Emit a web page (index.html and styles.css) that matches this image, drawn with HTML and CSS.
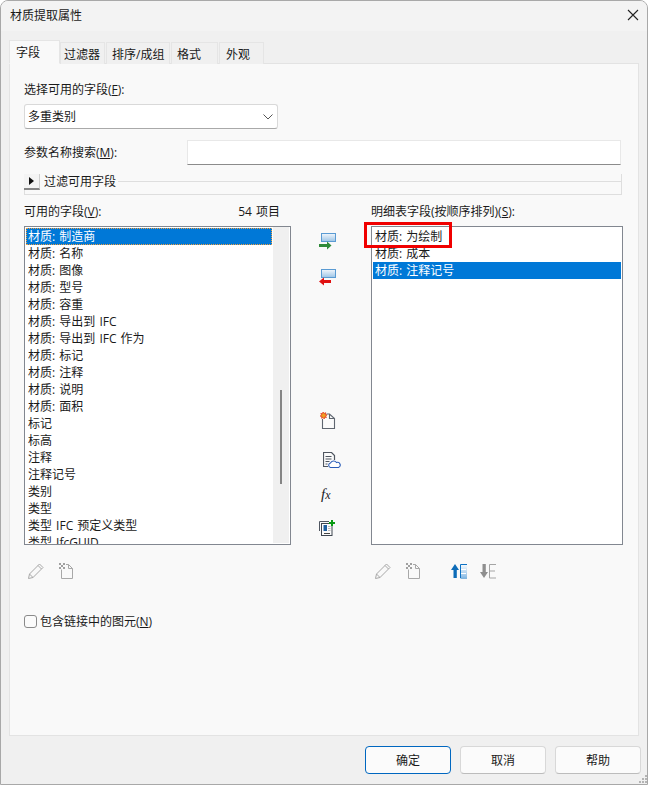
FILE: index.html
```html
<!DOCTYPE html>
<html lang="zh-CN">
<head>
<meta charset="utf-8">
<title>材质提取属性</title>
<link rel="stylesheet" href="styles.css">
</head>
<body>
<div class="window">
  <header class="titlebar">
    <span class="title">材质提取属性</span>
    <svg class="close" width="12" height="12" viewBox="0 0 12 12"><path d="M1 1L11 11M11 1L1 11" stroke="#222" stroke-width="1.1" fill="none"/></svg>
  </header>
  <main class="dialog">
    <nav class="tabs">
      <div class="tab active">字段</div>
      <div class="tab w45 tight">过滤器</div>
      <div class="tab w64">排序/成组</div>
      <div class="tab w47">格式</div>
      <div class="tab w45 wide">外观</div>
    </nav>
    <section class="panel">
      <div class="label first">选择可用的字段(<u>F</u>):</div>
      <div class="select">
        <span>多重类别</span>
        <svg width="10" height="6" viewBox="0 0 10 6"><path d="M0.5 0.5L5 5L9.5 0.5" stroke="#555" fill="none"/></svg>
      </div>
      <div class="search-row">
        <span class="search-label">参数名称搜索(<u>M</u>):</span>
        <div class="input"></div>
      </div>
      <div class="filter-row">
        <div class="expander"><svg width="5" height="8" viewBox="0 0 5 8"><path d="M0 0L5 4L0 8Z" fill="#111"/></svg></div>
        <span class="filter-text">过滤可用字段</span>
        <div class="filter-rule"></div>
      </div>
      <div class="columns">
        <div class="col-left">
          <div class="col-head"><span>可用的字段(<u>V</u>):</span><span class="count">54 项目</span></div>
          <div class="list">
            <div class="rows">
              <div class="row selected focus">材质: 制造商</div>
              <div class="row">材质: 名称</div>
              <div class="row">材质: 图像</div>
              <div class="row">材质: 型号</div>
              <div class="row">材质: 容重</div>
              <div class="row">材质: 导出到 IFC</div>
              <div class="row">材质: 导出到 IFC 作为</div>
              <div class="row">材质: 标记</div>
              <div class="row">材质: 注释</div>
              <div class="row">材质: 说明</div>
              <div class="row">材质: 面积</div>
              <div class="row">标记</div>
              <div class="row">标高</div>
              <div class="row">注释</div>
              <div class="row">注释记号</div>
              <div class="row">类别</div>
              <div class="row">类型</div>
              <div class="row">类型 IFC 预定义类型</div>
              <div class="row">类型 IfcGUID</div>
            </div>
            <div class="scrollbar"><div class="thumb"></div></div>
          </div>
          <div class="tools">
            <svg class="tool" width="18" height="18" viewBox="0 0 18 18"><path d="M1.500 16.500L2.500 12L12.500 2L16 5.500L6 15.500ZM2.500 12L6 15.500M11 3.500L14.500 7" fill="none" stroke="#a8a8a8"/></svg>
            <svg class="tool gap-doc" width="18" height="18" viewBox="0 0 18 18"><path d="M3.500 7.500V16.500H14.500V6.500H10.500V2.500H8M10.500 2.500L14.500 6.500" fill="none" stroke="#a8a8a8"/><path d="M1 1h2v2H1zM5 1h2v2H5zM3 3h2v2H3zM1 5h2v2H1zM5 5h2v2H5z" fill="#a0a0a0"/></svg>
          </div>
        </div>
        <div class="col-mid">
          <svg class="mid-icon first-mid" width="18" height="18" viewBox="0 0 18 18"><defs><linearGradient id="g1" x1="0" y1="0" x2="0" y2="1"><stop offset="0" stop-color="#f2f7fc"/><stop offset="1" stop-color="#9cc4e6"/></linearGradient></defs><rect x="2.500" y="0.500" width="14" height="8" fill="url(#g1)" stroke="#5a9bd3"/><path d="M0 11h8V8.500l4.500 4-4.500 4V14H0Z" fill="#2f8a3a"/></svg>
          <svg class="mid-icon second-mid" width="18" height="18" viewBox="0 0 18 18"><rect x="2.500" y="0.500" width="14" height="8" fill="url(#g1)" stroke="#5a9bd3"/><path d="M12 11H5V8.500L0 12.500l5 4V14h7Z" fill="#e01010"/></svg>
          <svg class="mid-icon third-mid" width="18" height="18" viewBox="0 0 18 18"><path d="M3.500 7V16.500H15.500V6.500L10.500 2H7.500M10.500 2V6.500H15.500" fill="#fbfbfb" stroke="#5f6670" stroke-width="1.100"/><path d="M4 0l1 1.500 1.700-.8-.4 1.800 1.800.4-1.500 1 .8 1.700-1.800-.4-.4 1.800-1-1.500-1.700.8.400-1.800-1.800-.4 1.500-1-.8-1.700 1.800.4z" fill="#f0a020" stroke="#e02a10" stroke-width=".7"/></svg>
          <svg class="mid-icon fourth-mid" width="18" height="18" viewBox="0 0 18 18"><path d="M5 14.500H0.500V0.500H8.500L11.500 3.500V8" fill="#fbfbfb" stroke="#4f5660" stroke-width="1.200"/><path d="M2.500 4.500h6M2.500 7h6M2.500 9.500h4M2.500 12h2" stroke="#4f5660"/><path d="M7.500 15.500a2.300 2.300 0 0 1 0-4.500a3.500 3.500 0 0 1 6-.5a2.500 2.500 0 0 1 2 5Z" fill="#fff" stroke="#2a5cb8" stroke-width="1.100"/></svg>
          <div class="fx"><i>f</i><i class="x">x</i></div>
          <svg class="mid-icon sixth-mid" width="18" height="18" viewBox="0 0 18 18"><path d="M0.500 11V1.500H10" fill="none" stroke="#4f5660"/><rect x="2.500" y="3.500" width="10.500" height="12" fill="#fbfbfb" stroke="#3f4650"/><rect x="4.500" y="5" width="3.500" height="6" fill="#1d5f9f"/><path d="M9 6.500h2.500M9 8.500h2.500M9 10.500h2.500" stroke="#bbb"/><path d="M5 13.500h6" stroke="#444"/><path d="M12 0h2v2h2v2h-2v2h-2V4h-2V2h2Z" fill="#0a9a14"/></svg>
        </div>
        <div class="col-right">
          <div class="head-plain">明细表字段(按顺序排列)(<u>S</u>):</div>
          <div class="list list-right">
            <div class="rows">
              <div class="row">材质: 为绘制</div>
              <div class="row">材质: 成本</div>
              <div class="row selected">材质: 注释记号</div>
            </div>
            <div class="annotation"></div>
          </div>
          <div class="tools">
            <svg class="tool" width="18" height="18" viewBox="0 0 18 18"><path d="M1.500 16.500L2.500 12L12.500 2L16 5.500L6 15.500ZM2.500 12L6 15.500M11 3.500L14.500 7" fill="none" stroke="#a8a8a8"/></svg>
            <svg class="tool gap-doc" width="18" height="18" viewBox="0 0 18 18"><path d="M3.500 7.500V16.500H14.500V6.500H10.500V2.500H8M10.500 2.500L14.500 6.500" fill="none" stroke="#a8a8a8"/><path d="M1 1h2v2H1zM5 1h2v2H5zM3 3h2v2H3zM1 5h2v2H1zM5 5h2v2H5z" fill="#a0a0a0"/></svg>
            <svg class="tool gap-up" width="18" height="18" viewBox="0 0 18 18"><defs><linearGradient id="g2" x1="0" y1="0" x2="0" y2="1"><stop offset="0" stop-color="#f4f9fd"/><stop offset="1" stop-color="#8dbde6"/></linearGradient></defs><path d="M16 2.500H9.500V16H16" fill="none" stroke="#0d72c4"/><rect x="10" y="3" width="6" height="12.500" fill="url(#g2)"/><path d="M10 7.500h5M10 11.500h5" stroke="#fff"/><path d="M4 2L8 8H5.800V16H2.500V8H0Z" fill="#0d6cb8"/></svg>
            <svg class="tool gap-down" width="18" height="18" viewBox="0 0 18 18"><path d="M16 2.500H9.500V16H16M9.500 9H15" fill="none" stroke="#a5a5a5"/><path d="M4 16L8 10H5.800V2H2.500V10H0Z" fill="#8f8f8f"/></svg>
          </div>
        </div>
      </div>
      <label class="check"><span class="box"></span><span>包含链接中的图元(<u>N</u>)</span></label>
    </section>
    <footer class="footer">
      <div class="btn primary">确定</div>
      <div class="btn">取消</div>
      <div class="btn">帮助</div>
    </footer>
    <svg class="grip" width="8" height="8" viewBox="0 0 8 8"><path d="M6 0h2v2H6zM3 3h2v2H3zM6 3h2v2H6zM0 6h2v2H0zM3 6h2v2H3zM6 6h2v2H6z" fill="#b4b4b4"/></svg>
  </main>
</div>
</body>
</html>
```
FILE: styles.css
```css
* { box-sizing: border-box; }
html, body { margin: 0; padding: 0; }
body {
  width: 649px;
  height: 785px;
  overflow: hidden;
  font-family: "Open Sans", "Noto Sans CJK SC", sans-serif;
  font-size: 12px;
  line-height: 17px;
  color: #1a1a1a;
  background: #fff;
}
u { text-underline-offset: 1px; }
.window {
  position: relative;
  width: 648px;
  height: 785px;
  display: flex;
  flex-direction: column;
  border: 1px solid #a8a8a8;
  border-radius: 8px 8px 0 0;
  overflow: hidden;
  background: #f0f0f0;
}
.titlebar {
  height: 30px;
  flex: none;
  display: flex;
  align-items: center;
  justify-content: space-between;
  padding: 0 8px 2px 9px;
  background: #f3f3f3;
}
.title { font-size: 12px; color: #1a1a1a; }
.dialog {
  flex: 1;
  display: flex;
  flex-direction: column;
  padding: 10px 8px 0 8px;
  position: relative;
}
.tabs {
  display: flex;
  align-items: flex-end;
  height: 23px;
  gap: 1px;
  position: relative;
  z-index: 1;
  margin-bottom: -1px;
}
.tab {
  height: 22px;
  padding: 3px 0 0 5px;
  background: #f0f0f0;
  border: 1px solid #e5e5e5;
  border-bottom: none;
}
.tab.active {
  width: 51px;
  height: 24px;
  margin-right: -1px;
  padding: 3px 0 0 6px;
  background: #f9f9f9;
  border-bottom: 1px solid #f9f9f9;
}
.tight { padding-left: 3px; }
.wide { padding-left: 6px; }
.w45 { width: 45px; }
.w64 { width: 64px; }
.w47 { width: 47px; }
.panel {
  width: 630px;
  height: 673px;
  flex: none;
  padding: 17px 15px 0 14px;
  background: #f9f9f9;
  border: 1px solid #e3e3e3;
}
.first { height: 17px; }
.select {
  width: 254px;
  height: 25px;
  margin-top: 6px;
  display: flex;
  align-items: center;
  justify-content: space-between;
  padding: 0 4px 0 3px;
  background: #fff;
  border: 1px solid #d9d9d9;
  border-bottom-color: #a9a9a9;
  border-radius: 3px;
}
.search-row {
  display: flex;
  align-items: center;
  height: 25px;
  margin-top: 11px;
}
.search-label { width: 163px; }
.input {
  width: 434px;
  height: 25px;
  background: #fff;
  border: 1px solid #e8e8e8;
  border-bottom: 1px solid #8b8b8b;
}
.filter-row {
  display: flex;
  height: 21px;
  margin-top: 9px;
  width: 598px;
  border-bottom: 1px solid #dedede;
  border-right: 1px solid #dedede;
  border-left: 1px solid #dedede;
}
.expander {
  width: 16px;
  height: 16px;
  margin-left: -1px;
  display: flex;
  align-items: center;
  justify-content: center;
  background: #f4f4f4;
  border-right: 1px solid #cfcfcf;
  border-bottom: 2px solid #858585;
}
.filter-text { margin: -1px 0 0 4px; line-height: 17px; }
.filter-rule {
  flex: 1;
  height: 1px;
  margin: 7px 0 0 2px;
  background: #dedede;
}
.columns {
  display: grid;
  grid-template-columns: 267px 80px 252px;
  margin-top: 8px;
}
.col-head {
  display: flex;
  justify-content: space-between;
  height: 17px;
  padding-right: 11px;
}
.head-plain { height: 17px; }
.count { white-space: pre; word-spacing: 1px; }
.list {
  position: relative;
  height: 319px;
  margin-top: 6px;
  display: flex;
  background: #fff;
  border: 1px solid #828790;
  overflow: hidden;
}
.list-right { overflow: visible; }
.rows {
  flex: 1;
  padding: 1px 1px 0 1px;
  overflow: hidden;
}
.row {
  height: 17px;
  line-height: 17px;
  padding-left: 2px;
  white-space: nowrap;
  word-spacing: 1px;
}
.selected { background: #0078d7; color: #fff; }
.focus { outline: 1px dotted #f0a040; outline-offset: -1px; }
.scrollbar {
  width: 16px;
  flex: none;
  margin: 0 1px 1px 0;
  background: #f0f0f0;
  padding: 163px 0 0 7px;
}
.thumb { width: 2px; height: 94px; background: #858585; }
.col-mid {
  display: flex;
  flex-direction: column;
  align-items: flex-start;
  padding: 0 0 0 28px;
}
.mid-icon { display: block; flex: none; }
.first-mid { margin-top: 30px; }
.second-mid { margin-top: 18px; }
.third-mid { margin-top: 125px; }
.fourth-mid { margin-top: 22px; margin-left: 4px; }
.fx {
  height: 18px;
  margin: 16px 0 0 2px;
  font-family: "Liberation Serif", serif;
  font-size: 15px;
  line-height: 16px;
  color: #222;
}
.fx .x { font-size: 12px; }
.sixth-mid { margin-top: 16px; }
.col-right { min-width: 0; }
.annotation {
  position: absolute;
  left: -8px;
  top: -5px;
  width: 88px;
  height: 26px;
  border: 3px solid #f00000;
  pointer-events: none;
}
.tools {
  display: flex;
  height: 18px;
  margin-top: 17px;
  padding-left: 3px;
}
.gap-doc { margin-left: 13px; }
.gap-up { margin-left: 28px; }
.gap-down { margin-left: 11px; }
.check {
  display: flex;
  align-items: center;
  gap: 3px;
  height: 17px;
  margin-top: 33px;
}
.box {
  width: 13px;
  height: 13px;
  background: #fbfbfb;
  border: 1px solid #8a8a8a;
  border-radius: 3px;
}
.footer {
  display: flex;
  justify-content: flex-end;
  gap: 9px;
  margin: 10px -2px 0 0;
}
.btn {
  width: 86px;
  height: 28px;
  display: flex;
  align-items: center;
  justify-content: center;
  background: #fbfbfb;
  border: 1px solid #d8d8d8;
  border-bottom-color: #bcbcbc;
  border-radius: 4px;
}
.primary { border: 1.500px solid #0067c0; }
.grip {
  position: absolute;
  right: 0;
  bottom: 1px;
}
```
